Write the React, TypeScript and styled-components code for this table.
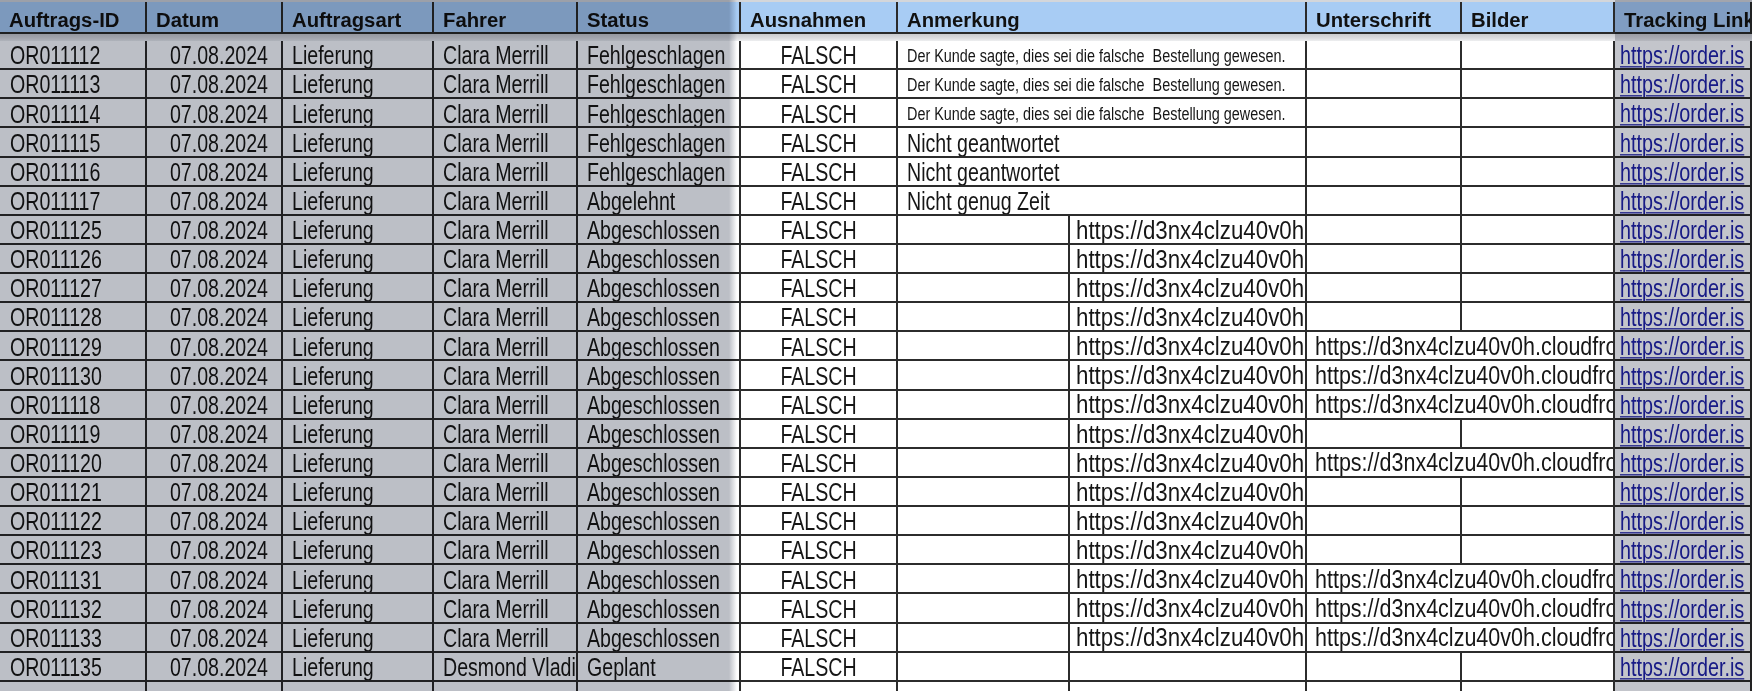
import React from "react";
import styled, { createGlobalStyle, css } from "styled-components";

const GlobalStyle = createGlobalStyle`
  html, body { margin: 0; padding: 0; background: #ffffff; }
  body { font-family: "Liberation Sans", Arial, sans-serif; overflow: hidden; }
`;

const COLS = "147px 136px 151px 144px 163px 157px 172px 237px 155px 153px 137px";
const ROW_H = 29.14;

const Sheet = styled.div`
  position: relative;
  width: 1752px;
  height: 691px;
  overflow: hidden;
  background: #ffffff;
  color: #161616;
`;

const TopStrip = styled.div`
  height: 2px;
  background: #d4d6da;
`;

const HeaderRow = styled.div`
  display: grid;
  grid-template-columns: ${COLS};
  height: 32px;
  box-sizing: border-box;
  background: #a8ccf4;
  border-bottom: 2px solid #2a2a2a;
`;

const HeaderCell = styled.div<{ $span?: number }>`
  box-sizing: border-box;
  border-right: 2px solid #2a2a2a;
  padding: 8px 0 0 9px;
  font-weight: 700;
  font-size: 20.3px;
  line-height: 20px;
  color: #111111;
  white-space: nowrap;
  overflow: hidden;
  ${(p) => p.$span && css`grid-column: span ${p.$span};`}
`;

const Band = styled.div`
  height: 7px;
  background: linear-gradient(to bottom, #c9cbce 0%, #dcdde0 60%, #eeeff0 100%);
`;

const DataRow = styled.div`
  display: grid;
  grid-template-columns: ${COLS};
  height: ${ROW_H}px;
  box-sizing: border-box;
  border-bottom: 2px solid #2c2c2c;
`;

type Align = "left" | "right" | "center";

const Cell = styled.div<{ $align?: Align; $span?: number; $pad?: number }>`
  box-sizing: border-box;
  border-right: 2px solid #2c2c2c;
  display: flex;
  align-items: center;
  overflow: hidden;
  white-space: nowrap;
  padding-top: 3px;
  padding-left: ${(p) => (p.$pad ?? 9)}px;
  padding-right: ${(p) => (p.$align === "right" ? 13 : 0)}px;
  justify-content: ${(p) =>
    p.$align === "right" ? "flex-end" : p.$align === "center" ? "center" : "flex-start"};
  ${(p) => p.$span && css`grid-column: span ${p.$span};`}
`;

const Text = styled.span<{ $small?: boolean }>`
  display: inline-block;
  font-size: ${(p) => (p.$small ? "14.4px" : "19.6px")};
  line-height: 1;
  transform: scaleY(1.27);
  transform-origin: center;
  white-space: nowrap;
`;

const UrlText = styled.span<{ $wide?: boolean }>`
  display: inline-block;
  font-size: ${(p) => (p.$wide ? "22.3px" : "21.5px")};
  line-height: 1;
  transform: scaleY(${(p) => (p.$wide ? 1.12 : 1.16)});
  transform-origin: center;
  white-space: nowrap;
`;

const LinkText = styled(Text)`
  font-size: 19.8px;
  color: #1f22a8;
  text-decoration: underline;
  text-decoration-thickness: 1px;
  text-underline-offset: 2px;
`;

const Shade = styled.div<{ $left: number; $width: number }>`
  position: absolute;
  top: 0;
  bottom: 0;
  left: ${(p) => p.$left}px;
  width: ${(p) => p.$width}px;
  background: #c3c5cb;
  mix-blend-mode: multiply;
  pointer-events: none;
`;

const LeftShade = styled(Shade)`
  background: linear-gradient(to right, #bcbfc6 0, #bcbfc6 ${(p) => p.$width - 8}px, rgba(255, 255, 255, 0) 100%);
`;

type Row = {
  id: string;
  driver?: string;
  status: string;
  note?: { small?: boolean; text: string };
  url?: boolean;
  sig?: boolean;
};

const SMALL_NOTE = "Der Kunde sagte, dies sei die falsche\u00a0\u00a0Bestellung gewesen.";

const rows: Row[] = [
  { id: "OR011112", status: "Fehlgeschlagen", note: { small: true, text: SMALL_NOTE } },
  { id: "OR011113", status: "Fehlgeschlagen", note: { small: true, text: SMALL_NOTE } },
  { id: "OR011114", status: "Fehlgeschlagen", note: { small: true, text: SMALL_NOTE } },
  { id: "OR011115", status: "Fehlgeschlagen", note: { text: "Nicht geantwortet" } },
  { id: "OR011116", status: "Fehlgeschlagen", note: { text: "Nicht geantwortet" } },
  { id: "OR011117", status: "Abgelehnt", note: { text: "Nicht genug Zeit" } },
  { id: "OR011125", status: "Abgeschlossen", url: true },
  { id: "OR011126", status: "Abgeschlossen", url: true },
  { id: "OR011127", status: "Abgeschlossen", url: true },
  { id: "OR011128", status: "Abgeschlossen", url: true },
  { id: "OR011129", status: "Abgeschlossen", url: true, sig: true },
  { id: "OR011130", status: "Abgeschlossen", url: true, sig: true },
  { id: "OR011118", status: "Abgeschlossen", url: true, sig: true },
  { id: "OR011119", status: "Abgeschlossen", url: true },
  { id: "OR011120", status: "Abgeschlossen", url: true, sig: true },
  { id: "OR011121", status: "Abgeschlossen", url: true },
  { id: "OR011122", status: "Abgeschlossen", url: true },
  { id: "OR011123", status: "Abgeschlossen", url: true },
  { id: "OR011131", status: "Abgeschlossen", url: true, sig: true },
  { id: "OR011132", status: "Abgeschlossen", url: true, sig: true },
  { id: "OR011133", status: "Abgeschlossen", url: true, sig: true },
  { id: "OR011135", driver: "Desmond Vladimirov", status: "Geplant" },
];

const headers: { label: string; span?: number }[] = [
  { label: "Auftrags-ID" },
  { label: "Datum" },
  { label: "Auftragsart" },
  { label: "Fahrer" },
  { label: "Status" },
  { label: "Ausnahmen" },
  { label: "Anmerkung", span: 2 },
  { label: "Unterschrift" },
  { label: "Bilder" },
  { label: "Tracking Link" },
];

const DataLine: React.FC<{ row: Row }> = ({ row }) => (
  <DataRow>
    <Cell $pad={10}><Text>{row.id}</Text></Cell>
    <Cell $align="right"><Text>07.08.2024</Text></Cell>
    <Cell><Text>Lieferung</Text></Cell>
    <Cell><Text>{row.driver ?? "Clara Merrill"}</Text></Cell>
    <Cell><Text>{row.status}</Text></Cell>
    <Cell $align="center" $pad={0}><Text>FALSCH</Text></Cell>
    {row.note ? (
      <Cell $span={2}><Text $small={row.note.small}>{row.note.text}</Text></Cell>
    ) : (
      <>
        <Cell />
        <Cell $pad={6}>{row.url && <UrlText $wide>https://d3nx4clzu40v0h</UrlText>}</Cell>
      </>
    )}
    {row.sig ? (
      <Cell $span={2} $pad={8}><UrlText>https://d3nx4clzu40v0h.cloudfront.net</UrlText></Cell>
    ) : (
      <>
        <Cell />
        <Cell />
      </>
    )}
    <Cell $pad={5}><LinkText>https://order.is</LinkText></Cell>
  </DataRow>
);

const EmptyLine: React.FC = () => (
  <DataRow>
    {Array.from({ length: 11 }).map((_, i) => (
      <Cell key={i} />
    ))}
  </DataRow>
);

export default function App() {
  return (
    <>
      <GlobalStyle />
      <Sheet>
        <TopStrip />
        <HeaderRow>
          {headers.map((h) => (
            <HeaderCell key={h.label} $span={h.span}>{h.label}</HeaderCell>
          ))}
        </HeaderRow>
        <Band />
        {rows.map((r) => (
          <DataLine key={r.id} row={r} />
        ))}
        <EmptyLine />
        <LeftShade $left={0} $width={737} />
        <Shade $left={1615} $width={137} />
      </Sheet>
    </>
  );
}
